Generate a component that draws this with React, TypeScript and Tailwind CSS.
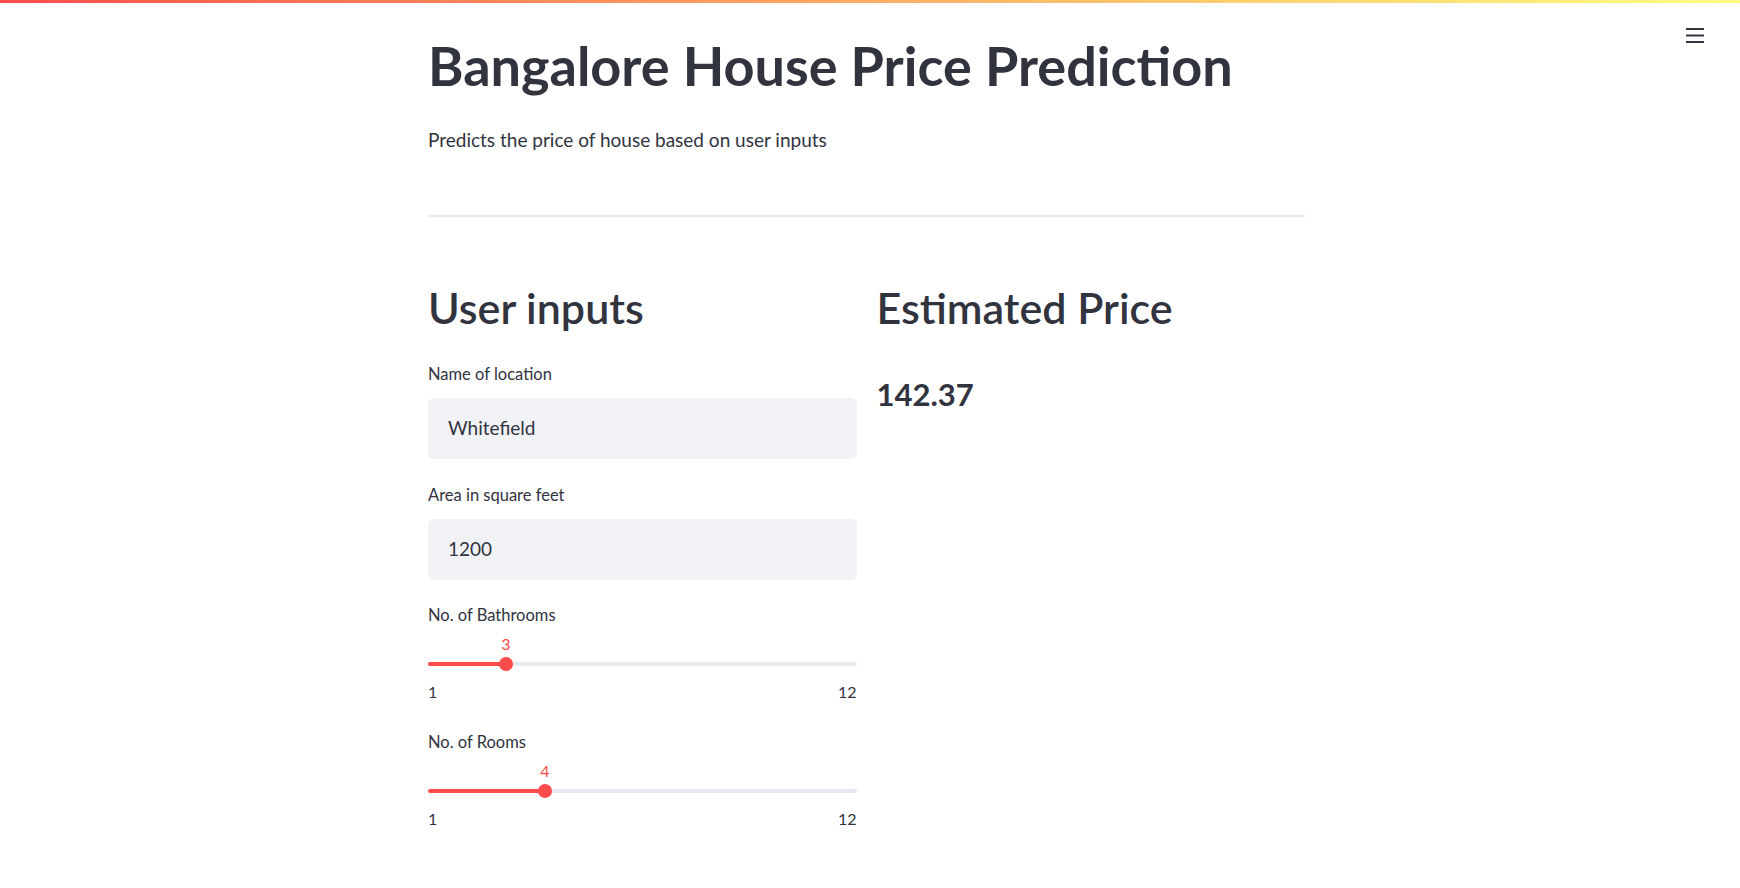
import React from "react";

function Field({ label, value }: { label: string; value: string }) {
  return (
    <div>
      <div className="mb-[12px] text-[16.5px] leading-[24px]">{label}</div>
      <div className="flex h-[61px] items-center rounded-[6px] bg-[#f0f2f6] pl-[20px] text-[19px]">
        {value}
      </div>
    </div>
  );
}

function Slider({ label, value, min, max }: { label: string; value: number; min: number; max: number }) {
  const pct = ((value - min) / (max - min)) * 100;
  return (
    <div>
      <div className="mb-[8px] text-[16.5px] leading-[24px]">{label}</div>
      <div className="relative h-[20px]">
        <span
          className="absolute top-[-1px] -translate-x-1/2 text-[16px] leading-[20px] text-[#ff4b4b]"
          style={{ left: `${pct}%` }}
        >
          {value}
        </span>
      </div>
      <div className="relative mt-[2px] flex h-[14px] items-center">
        <div className="h-[4px] w-full rounded-full bg-[#e5e9f0]">
          <div className="h-full rounded-full bg-[#ff4b4b]" style={{ width: `${pct}%` }} />
        </div>
        <div
          className="absolute top-0 h-[14px] w-[14px] -translate-x-1/2 rounded-full bg-[#ff4b4b]"
          style={{ left: `${pct}%` }}
        />
      </div>
      <div className="mt-[11px] flex justify-between text-[16px] leading-[20px]">
        <span>{min}</span>
        <span>{max}</span>
      </div>
    </div>
  );
}

export default function App() {
  return (
    <div className="relative min-h-[888px] bg-white font-['Lato',sans-serif] text-[#31333f]">
      <div className="h-[3px] bg-linear-to-r from-[#ff4b4b] to-[#fffd80]" />
      <button className="absolute right-[36px] top-[27px]" aria-label="menu">
        <svg width="18" height="17" viewBox="0 0 18 17">
          <rect x="0" y="1" width="18" height="2" rx="0.5" fill="#31333f" />
          <rect x="0" y="7.5" width="18" height="2" rx="0.5" fill="#31333f" />
          <rect x="0" y="14" width="18" height="2" rx="0.5" fill="#31333f" />
        </svg>
      </button>
      <main className="ml-[428px] w-[877px]">
        <h1 className="mt-[28px] text-[54px] font-bold leading-[70px]">Bangalore House Price Prediction</h1>
        <p className="mt-[24px] text-[19px] leading-[30px]">Predicts the price of house based on user inputs</p>
        <div className="mt-[60px] h-[2px] bg-[#ececee]" />
        <div className="mt-[64px] grid grid-cols-2 gap-x-[20px]">
          <div>
            <h2 className="text-[43px] font-semibold leading-[54px]">User inputs</h2>
            <div className="mt-[27px] flex flex-col">
              <Field label="Name of location" value="Whitefield" />
              <div className="mt-[24px]">
                <Field label="Area in square feet" value="1200" />
              </div>
              <div className="mt-[23px]">
                <Slider label="No. of Bathrooms" value={3} min={1} max={12} />
              </div>
              <div className="mt-[28px]">
                <Slider label="No. of Rooms" value={4} min={1} max={12} />
              </div>
            </div>
          </div>
          <div>
            <h2 className="text-[43px] font-semibold leading-[54px]">Estimated Price</h2>
            <div className="mt-[39px] text-[31px] font-bold leading-[40px]">142.37</div>
          </div>
        </div>
      </main>
    </div>
  );
}
